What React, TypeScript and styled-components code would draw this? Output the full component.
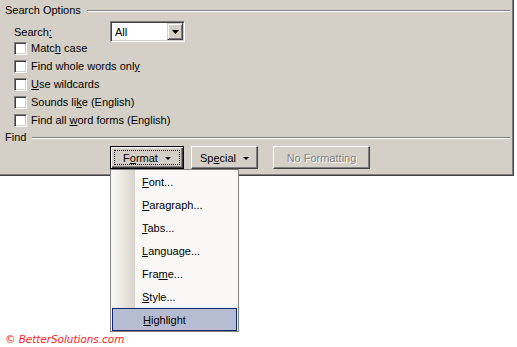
import React from "react";
import styled, { createGlobalStyle } from "styled-components";

const Global = createGlobalStyle`
  html, body { margin: 0; padding: 0; background: #ffffff; }
  body { font-family: "Liberation Sans", Arial, sans-serif; font-size: 11px; color: #000; }
`;

const Page = styled.div`
  position: relative;
  width: 517px;
  height: 347px;
  display: flex;
  flex-direction: column;
  overflow: hidden;
`;

const Dialog = styled.div`
  box-sizing: border-box;
  width: 514px;
  height: 176px;
  background: #d4d0c8;
  border-right: 1px solid #404040;
  border-bottom: 1px solid #404040;
  box-shadow: inset -1px -1px 0 #808080;
  display: flex;
  flex-direction: column;
`;

const GroupHeader = styled.div<{ $h: number }>`
  display: flex;
  align-items: center;
  height: ${(p) => p.$h}px;
  padding: 0 3px 0 5px;
  gap: 6px;
`;

const GroupLabel = styled.span`
  white-space: nowrap;
  line-height: 13px;
`;

const Etch = styled.div`
  flex: 1;
  height: 0;
  border-top: 1px solid #808080;
  border-bottom: 1px solid #ffffff;
`;

const SearchRow = styled.div`
  display: flex;
  align-items: center;
  height: 21px;
  padding-left: 14px;
  margin-bottom: -3px;
`;

const SearchLabel = styled.span`
  width: 96px;
`;

const Select = styled.div`
  box-sizing: border-box;
  width: 75px;
  height: 21px;
  background: #fff;
  border-top: 1px solid #808080;
  border-left: 1px solid #808080;
  border-right: 1px solid #fff;
  border-bottom: 1px solid #fff;
  box-shadow: inset 1px 1px 0 #404040, inset -1px -1px 0 #d4d0c8;
  display: flex;
  align-items: center;
  padding: 1px 1px 1px 4px;
`;

const SelectText = styled.span`
  flex: 1;
`;

const ArrowBtn = styled.div`
  box-sizing: border-box;
  width: 16px;
  height: 17px;
  background: #d4d0c8;
  border-top: 1px solid #d4d0c8;
  border-left: 1px solid #d4d0c8;
  border-right: 1px solid #404040;
  border-bottom: 1px solid #404040;
  box-shadow: inset 1px 1px 0 #fff, inset -1px -1px 0 #808080;
  display: flex;
  align-items: center;
  justify-content: center;
`;

const CheckList = styled.div`
  display: flex;
  flex-direction: column;
  padding-left: 14px;
`;

const CheckRow = styled.label`
  display: flex;
  align-items: center;
  height: 18px;
  gap: 4px;
`;

const Box = styled.span`
  box-sizing: border-box;
  width: 13px;
  height: 13px;
  background: #fff;
  border-top: 1px solid #808080;
  border-left: 1px solid #808080;
  border-right: 1px solid #fff;
  border-bottom: 1px solid #fff;
  box-shadow: inset 1px 1px 0 #404040, inset -1px -1px 0 #d4d0c8;
`;

const ButtonRow = styled.div`
  display: flex;
  height: 23px;
  padding-left: 110px;
`;

const Button = styled.div<{ $w: number; $gap: number; $focus?: boolean; $disabled?: boolean }>`
  box-sizing: border-box;
  width: ${(p) => p.$w}px;
  height: 23px;
  margin-right: ${(p) => p.$gap}px;
  background: #d4d0c8;
  border: 1px solid;
  border-color: ${(p) => (p.$focus ? "#000" : "#fff #404040 #404040 #fff")};
  box-shadow: ${(p) =>
    p.$focus
      ? "inset 1px 1px 0 #fff, inset -1px -1px 0 #404040, inset -2px -2px 0 #808080"
      : "inset -1px -1px 0 #808080"};
  display: flex;
  align-items: center;
  justify-content: center;
  position: relative;
  color: ${(p) => (p.$disabled ? "#808080" : "#000")};
  text-shadow: ${(p) => (p.$disabled ? "1px 1px 0 #fff" : "none")};
  gap: 7px;
`;

const FocusRect = styled.span`
  position: absolute;
  inset: 3px;
  border: 1px dotted #000;
`;

const Caret = styled.span`
  width: 0;
  height: 0;
  border-left: 3px solid transparent;
  border-right: 3px solid transparent;
  border-top: 3px solid #000;
  margin-top: 1px;
`;

const Menu = styled.div`
  position: absolute;
  left: 110px;
  top: 169px;
  box-sizing: border-box;
  width: 129px;
  height: 163px;
  border: 1px solid #808080;
  background: #f9f8f7;
  display: flex;
  flex-direction: column;
`;

const Item = styled.div<{ $active?: boolean }>`
  box-sizing: border-box;
  height: 23px;
  display: flex;
  align-items: center;
  padding-left: ${(p) => (p.$active ? "30px" : "31px")};
  margin: ${(p) => (p.$active ? "0 1px 0 1px" : "0")};
  background: ${(p) =>
    p.$active
      ? "#b6bdd2"
      : "linear-gradient(to right, #fbfaf9 0px, #e7e4df 14px, #d8d4cd 24px, #f9f8f7 24px)"};
  border: ${(p) => (p.$active ? "1px solid #0a246a" : "none")};
`;

const Footer = styled.div`
  margin-top: auto;
  padding: 0 0 2px 5px;
  font-family: "DejaVu Sans", Verdana, sans-serif;
  font-style: italic;
  font-size: 10.4px;
  color: #ff2424;
  line-height: 12px;
`;

const U = styled.span`
  text-decoration: underline;
`;

const checks: React.ReactNode[] = [
  <>Matc<U>h</U> case</>,
  <>Find whole words onl<U>y</U></>,
  <><U>U</U>se wildcards</>,
  <>Sounds li<U>k</U>e (English)</>,
  <>Find all <U>w</U>ord forms (English)</>,
];

const items: { node: React.ReactNode; active?: boolean }[] = [
  { node: <><U>F</U>ont...</> },
  { node: <><U>P</U>aragraph...</> },
  { node: <><U>T</U>abs...</> },
  { node: <><U>L</U>anguage...</> },
  { node: <>Fra<U>m</U>e...</> },
  { node: <><U>S</U>tyle...</> },
  { node: <><U>H</U>ighlight</>, active: true },
];

export default function App() {
  return (
    <>
      <Global />
      <Page>
        <Dialog>
          <GroupHeader $h={21}>
            <GroupLabel>Search Options</GroupLabel>
            <Etch />
          </GroupHeader>
          <SearchRow>
            <SearchLabel>
              Search<U>:</U>
            </SearchLabel>
            <Select>
              <SelectText>All</SelectText>
              <ArrowBtn>
                <svg width="7" height="4" viewBox="0 0 7 4">
                  <path d="M0 0h7L3.5 4z" fill="#000" />
                </svg>
              </ArrowBtn>
            </Select>
          </SearchRow>
          <CheckList>
            {checks.map((c, i) => (
              <CheckRow key={i}>
                <Box />
                <span>{c}</span>
              </CheckRow>
            ))}
          </CheckList>
          <GroupHeader $h={17}>
            <GroupLabel>Find</GroupLabel>
            <Etch />
          </GroupHeader>
          <ButtonRow>
            <Button $w={74} $gap={7} $focus>
              <FocusRect />
              <span>
                F<U>o</U>rmat
              </span>
              <Caret />
            </Button>
            <Button $w={67} $gap={15}>
              <span>
                Sp<U>e</U>cial
              </span>
              <Caret />
            </Button>
            <Button $w={97} $gap={0} $disabled>
              No Formatting
            </Button>
          </ButtonRow>
        </Dialog>
        <Footer>© BetterSolutions.com</Footer>
        <Menu>
          {items.map((it, i) => (
            <Item key={i} $active={it.active}>
              <span>{it.node}</span>
            </Item>
          ))}
        </Menu>
      </Page>
    </>
  );
}
